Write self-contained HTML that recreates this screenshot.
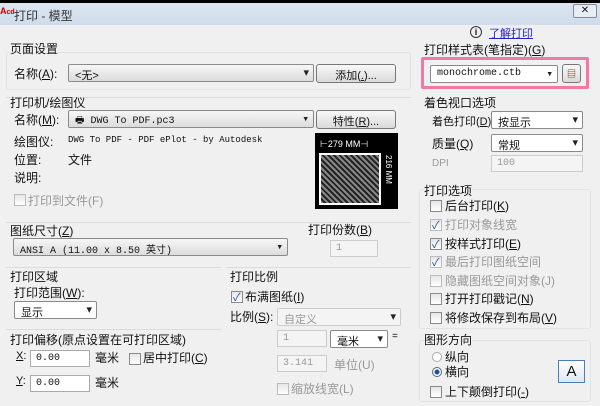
<!DOCTYPE html>
<html><head><meta charset="utf-8"><style>
*{box-sizing:border-box;margin:0;padding:0}
body{width:600px;height:406px;overflow:hidden;background:#f0f0f0;font-family:"Liberation Sans","Noto Sans CJK SC",sans-serif;font-size:11px;color:#111;position:relative}
.a{position:absolute;white-space:nowrap}
.cb{position:absolute;height:18px;border:1px solid #8a8a8a;border-radius:2px;background:linear-gradient(#f6f6f6,#dcdcdc);font-family:"Liberation Mono","Noto Sans CJK SC",monospace;font-size:10px;padding:2px 6px;white-space:nowrap}
.cb:after{content:"▾";position:absolute;right:4px;top:1px;font-size:11px;color:#222}
.wcb{background:#fff}
.btn{position:absolute;height:19px;border:1px solid #777;border-radius:3px;background:linear-gradient(#f8f8f8,#dadada);text-align:center;padding-top:2px}
.inp{position:absolute;height:17px;border:1px solid #aaa;background:#fff;font-size:10px;padding:2px 5px;font-family:"Liberation Mono",monospace}
.dis{background:#f4f4f4;color:#999;border-color:#ccc}
.hl{position:absolute;height:1px;background:#dcdcdc}
.ck{position:absolute;width:12px;height:12px;border:1px solid #8a8a8a;background:linear-gradient(#e6e6e6,#fff)}
.ck.on:after{content:"✓";position:absolute;left:1px;top:-3px;font-size:11px;color:#2a4fa0}
.g{color:#999}
.grp{position:absolute;border:1px solid #e2e2e2;border-radius:3px}
</style></head><body>
<div class="a" style="left:0;top:0;width:600px;height:3px;background:#000"></div>
<div class="a" style="left:0;top:3px;width:600px;height:22px;background:linear-gradient(#dbe6f1,#cfdcea)"></div>
<div class="a" style="left:0;top:6px;font-size:9px;color:#c00;font-weight:bold">A<span style="font-size:7px">cd</span></div>
<div class="a" style="left:14px;top:7px;font-size:12px;color:#333">打印 - 模型</div>
<div class="a" style="left:573px;top:4px;width:24px;height:14px;border:1px solid #889;border-radius:2px;background:#e8edf3;text-align:center;font-size:10px;line-height:12px">✕</div>

<div class="grp" style="left:6px;top:52px;width:405px;height:38px"></div>
<div class="a" style="left:10px;top:40px;background:#f0f0f0;font-size:12px">页面设置</div>
<div class="a" style="left:14px;top:65px;font-size:12px">名称(<u>A</u>):</div>
<div class="cb" style="left:68px;top:64px;width:246px;font-family:'Liberation Sans','Noto Sans CJK SC',sans-serif;font-size:11px">&lt;无&gt;</div>
<div class="btn" style="left:316px;top:64px;width:80px">添加(<u>.</u>)...</div>

<div class="hl" style="left:6px;top:97px;width:405px"></div>
<div class="a" style="left:10px;top:94px;font-size:12px">打印机/绘图仪</div>
<div class="a" style="left:14px;top:111px;font-size:12px">名称(<u>M</u>):</div>
<div class="cb" style="left:68px;top:110px;width:246px">🖶 DWG To PDF.pc3</div>
<div class="btn" style="left:316px;top:110px;width:80px">特性(<u>R</u>)...</div>
<div class="a" style="left:14px;top:133px;font-size:12px">绘图仪:</div>
<div class="a" style="left:68px;top:135px;font-size:9px;font-family:'Liberation Mono',monospace">DWG To PDF - PDF ePlot - by Autodesk</div>
<div class="a" style="left:14px;top:151px;font-size:12px">位置:</div>
<div class="a" style="left:68px;top:151px;font-size:12px">文件</div>
<div class="a" style="left:14px;top:169px;font-size:12px">说明:</div>
<div class="ck" style="left:14px;top:194px;border-color:#bbb"></div>
<div class="a g" style="left:28px;top:192px;font-size:12px">打印到文件(F)</div>

<div class="a" style="left:315px;top:133px;width:83px;height:76px;background:#000"></div>
<div class="a" style="left:320px;top:139px;color:#fff;font-size:9px">⊢279 MM⊣</div>
<div class="a" style="left:319px;top:153px;width:62px;height:52px;border:2px solid #fff;background:repeating-linear-gradient(45deg,#888 0 2px,#222 2px 4px)"></div>
<div class="a" style="left:384px;top:155px;color:#fff;font-size:8px;writing-mode:vertical-rl">216 MM</div>

<div class="hl" style="left:6px;top:222px;width:405px"></div>
<div class="a" style="left:10px;top:222px;font-size:12px">图纸尺寸(<u>Z</u>)</div>
<div class="cb" style="left:13px;top:238px;width:275px">ANSI A (11.00 x 8.50 英寸)</div>
<div class="a" style="left:308px;top:221px;font-size:12px">打印份数(<u>B</u>)</div>
<div class="inp dis" style="left:330px;top:240px;width:48px">1</div>

<div class="hl" style="left:6px;top:267px;width:215px"></div>
<div class="a" style="left:10px;top:268px;font-size:12px">打印区域</div>
<div class="a" style="left:14px;top:284px;font-size:12px">打印范围(<u>W</u>):</div>
<div class="cb wcb" style="left:14px;top:301px;width:83px;font-family:'Liberation Sans','Noto Sans CJK SC',sans-serif;font-size:11px">显示</div>
<div class="hl" style="left:6px;top:329px;width:215px"></div>
<div class="a" style="left:10px;top:331px;font-size:12px">打印偏移(原点设置在可打印区域)</div>
<div class="a" style="left:16px;top:350px;font-size:11px"><u>X</u>:</div>
<div class="inp" style="left:30px;top:350px;width:60px">0.00</div>
<div class="a" style="left:95px;top:349px;font-size:12px">毫米</div>
<div class="ck" style="left:129px;top:353px"></div>
<div class="a" style="left:143px;top:349px;font-size:12px">居中打印(<u>C</u>)</div>
<div class="a" style="left:16px;top:375px;font-size:11px"><u>Y</u>:</div>
<div class="inp" style="left:30px;top:375px;width:60px">0.00</div>
<div class="a" style="left:95px;top:374px;font-size:12px">毫米</div>

<div class="hl" style="left:226px;top:267px;width:185px"></div>
<div class="a" style="left:230px;top:268px;font-size:12px">打印比例</div>
<div class="ck on" style="left:231px;top:291px"></div>
<div class="a" style="left:245px;top:288px;font-size:12px">布满图纸(<u>I</u>)</div>
<div class="a" style="left:230px;top:308px;font-size:12px">比例(<u>S</u>):</div>
<div class="cb dis" style="left:277px;top:308px;width:124px;font-family:'Liberation Sans','Noto Sans CJK SC',sans-serif;font-size:11px;background:#f4f4f4">自定义</div>
<div class="inp dis" style="left:277px;top:330px;width:50px">1</div>
<div class="cb wcb" style="left:330px;top:330px;width:58px;font-family:'Liberation Sans','Noto Sans CJK SC',sans-serif;font-size:11px">毫米</div>
<div class="a" style="left:392px;top:331px;font-size:10px">=</div>
<div class="inp dis" style="left:277px;top:355px;width:50px">3.141</div>
<div class="a g" style="left:334px;top:356px;font-size:12px">单位(U)</div>
<div class="ck" style="left:277px;top:383px;border-color:#bbb"></div>
<div class="a g" style="left:291px;top:380px;font-size:12px">缩放线宽(L)</div>

<div class="a" style="left:470px;top:26px;width:12px;height:12px;border:1px solid #333;border-radius:50%;font-size:9px;text-align:center;line-height:10px;font-weight:bold">i</div>
<div class="a" style="left:489px;top:25px;font-size:11px;color:#22c;text-decoration:underline">了解打印</div>
<div class="a" style="left:424px;top:41px;font-size:12px">打印样式表(笔指定)(<u>G</u>)</div>
<div class="a" style="left:421px;top:57px;width:168px;height:32px;border:3px solid #f07aa5;border-radius:2px"></div>
<div class="cb wcb" style="left:430px;top:65px;width:128px">monochrome.ctb</div>
<div class="btn" style="left:562px;top:64px;width:19px;font-size:9px;color:#a00">▤</div>

<div class="a" style="left:424px;top:94px;font-size:12px">着色视口选项</div>
<div class="a" style="left:432px;top:113px;font-size:11px">着色打印(<u>D</u>)</div>
<div class="cb wcb" style="left:491px;top:111px;width:92px;font-family:'Liberation Sans','Noto Sans CJK SC',sans-serif;font-size:11px">按显示</div>
<div class="a" style="left:432px;top:135px;font-size:12px">质量(<u>Q</u>)</div>
<div class="cb wcb" style="left:491px;top:134px;width:92px;font-family:'Liberation Sans','Noto Sans CJK SC',sans-serif;font-size:11px">常规</div>
<div class="a g" style="left:432px;top:158px;font-size:10px">DPI</div>
<div class="inp dis" style="left:491px;top:155px;width:92px">100</div>

<div class="grp" style="left:419px;top:189px;width:172px;height:140px"></div>
<div class="a" style="left:424px;top:182px;font-size:12px;background:#f0f0f0">打印选项</div>
<div class="ck" style="left:430px;top:200px"></div><div class="a" style="left:445px;top:197px;font-size:12px">后台打印(<u>K</u>)</div>
<div class="ck on" style="left:430px;top:219px;border-color:#bbb"></div><div class="a g" style="left:445px;top:216px;font-size:12px">打印对象线宽</div>
<div class="ck on" style="left:430px;top:238px"></div><div class="a" style="left:445px;top:235px;font-size:12px">按样式打印(<u>E</u>)</div>
<div class="ck on" style="left:430px;top:256px;border-color:#bbb"></div><div class="a g" style="left:445px;top:253px;font-size:12px">最后打印图纸空间</div>
<div class="ck" style="left:430px;top:275px;border-color:#bbb"></div><div class="a g" style="left:445px;top:272px;font-size:12px">隐藏图纸空间对象(J)</div>
<div class="ck" style="left:430px;top:293px"></div><div class="a" style="left:445px;top:290px;font-size:12px">打开打印戳记(<u>N</u>)</div>
<div class="ck" style="left:430px;top:312px"></div><div class="a" style="left:445px;top:309px;font-size:12px">将修改保存到布局(<u>V</u>)</div>

<div class="grp" style="left:419px;top:340px;width:172px;height:62px"></div>
<div class="a" style="left:424px;top:331px;font-size:12px;background:#f0f0f0">图形方向</div>
<div class="a" style="left:432px;top:352px;width:10px;height:10px;border:1px solid #aaa;border-radius:50%;background:#fff"></div>
<div class="a" style="left:445px;top:348px;font-size:12px">纵向</div>
<div class="a" style="left:432px;top:367px;width:10px;height:10px;border:1px solid #567;border-radius:50%;background:radial-gradient(#1d4fa0 0 2px,#fff 3px)"></div>
<div class="a" style="left:445px;top:363px;font-size:12px">横向</div>
<div class="ck" style="left:430px;top:386px"></div><div class="a" style="left:445px;top:383px;font-size:12px">上下颠倒打印(<u>-</u>)</div>
<div class="a" style="left:558px;top:360px;width:27px;height:23px;border:1px solid #4a7fb5;background:linear-gradient(#fff,#dde8f4);text-align:center;font-size:15px;line-height:21px">A</div>
</body></html>
